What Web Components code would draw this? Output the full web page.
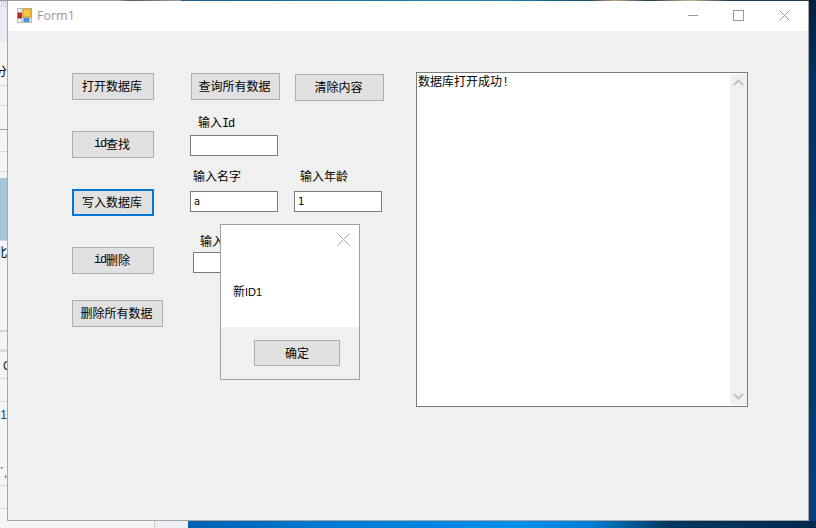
<!DOCTYPE html>
<html>
<head>
<meta charset="utf-8">
<title>Form1</title>
<style>
  html, body { margin: 0; padding: 0; width: 816px; height: 528px; overflow: hidden; }
  body { font: 12px "Noto Sans CJK SC", sans-serif; color: #000; }
  /* half width latin, like SimSun */
  .l { font: 12px "Liberation Mono", monospace; letter-spacing: -1.2px; }
  .s { font: 11px "Liberation Sans", sans-serif; }
</style>
</head>
<body>
<win-desktop>
  <win-form caption="Form1">
    <form-col slot="buttons">
      <win-button>打开数据库</win-button>
      <win-button style="margin-top:31px"><span class="l">id</span>查找</win-button>
      <win-button focused style="margin-top:31px">写入数据库</win-button>
      <win-button style="margin-top:31px"><span class="l">id</span>删除</win-button>
      <win-button wide style="margin-top:26px;width:91px">删除所有数据</win-button>
    </form-col>
    <form-col slot="fields">
      <form-row style="margin-left:1px">
        <win-button wide>查询所有数据</win-button>
        <win-button wide style="margin:1px 0 0 15px">清除内容</win-button>
      </form-row>
      <form-row style="margin-top:13px">
        <win-field label-pad="8">输入<span class="l">Id</span></win-field>
      </form-row>
      <form-row style="margin-top:12px">
        <win-field label-pad="3" value="a" gap="7">输入名字</win-field>
        <win-field label-pad="6" value="1" gap="7" style="margin-left:16px">输入年龄</win-field>
      </form-row>
      <form-row style="margin:21px 0 0 3px">
        <win-field label-pad="7" gap="3">输入</win-field>
      </form-row>
    </form-col>
    <win-textbox slot="log">数据库打开成功<span class="l">!</span></win-textbox>
    <win-dialog slot="dialog">新<span class="s">ID1</span></win-dialog>
  </win-form>
</win-desktop>

<template id="desktop-tpl">
  <style>
    :host { display: block; position: relative; width: 816px; height: 528px; overflow: hidden; background: #f5f5f5; }
    .top { position: absolute; left: 0; top: 0; width: 816px; height: 1px;
      background: linear-gradient(90deg, #9a9a9a 0, #a0a0a0 118px, #555 130px, #a0a0a0 180px, #1c5f8c 182px, #2480b0 500px, #1a4a6a 590px, #c0a870 615px, #1e3a50 650px, #c0b890 690px, #1e3a50 730px); }
    .right { position: absolute; left: 809px; top: 0; width: 7px; height: 528px;
      background: linear-gradient(180deg, #001e3c 0, #003264 80px, #00386e 250px, #003a70 400px, #004080 528px); }
    .bottom { position: absolute; left: 188px; top: 521px; width: 628px; height: 7px;
      background: linear-gradient(90deg, #0060ae 0, #0078d0 120px, #008eec 330px, #0080d8 400px, #00385f 480px, #002a50 620px); }
    .tab { position: absolute; left: 154px; top: 521px; width: 33px; height: 7px; background: #eeedf3; border-left: 1px solid #c8c8d8; }
    .head { position: absolute; left: 0; top: 1px; width: 7px; height: 41px; background: #ebebf3; }
    .grip { position: absolute; left: 1px; top: 1px; display: block; }
    .cell { position: absolute; left: 0; width: 7px; height: 1px; background: #d4d4e4; }
    .blue { position: absolute; left: 0; top: 178px; width: 7px; height: 62px; background: #a3c5d8; }
    .clip { position: absolute; left: -6px; width: 13px; height: 16px; overflow: hidden; font-size: 12px; line-height: 16px; text-align: right; }
  </style>
  <div class="top"></div>
  <div class="right"></div>
  <div class="bottom"></div>
  <div class="tab"></div>
  <div class="head"></div>
  <svg class="grip" width="6" height="6" viewBox="0 0 6 6"><path d="M0 1h1M4 1h1M2 3h1M0 5h1M4 5h1" stroke="#9a9aa4" fill="none"/></svg>
  <div class="cell" style="top:85px"></div>
  <div class="cell" style="top:105px"></div>
  <div class="cell" style="top:129px;background:#a0a0a0"></div>
  <div class="cell" style="top:151px"></div>
  <div class="cell" style="top:171px"></div>
  <div class="blue"></div>
  <div class="cell" style="top:240px"></div>
  <div class="cell" style="top:330px;height:2px;background:#c6d4e4"></div>
  <div class="cell" style="top:349px;height:3px;background:#dcdcdc"></div>
  <div class="cell" style="top:378px"></div>
  <div class="cell" style="top:401px"></div>
  <div class="cell" style="top:485px"></div>
  <div class="cell" style="top:508px"></div>
  <div class="clip" style="top:63px">分</div>
  <div class="clip" style="top:244px">北</div>
  <div class="clip" style="top:358px;color:#402010;font-family:'Liberation Sans',sans-serif;left:3px;width:4px;text-align:left">O</div>
  <div class="clip" style="top:407px;color:#204060;font-family:'Liberation Sans',sans-serif">:1</div>
  <div class="clip" style="top:465px;color:#405060;font-family:'Liberation Sans',sans-serif">`,</div>
  <slot></slot>
</template>

<template id="form-tpl">
  <style>
    :host { display: block; position: absolute; left: 7px; top: 1px; width: 800px; height: 519px; border: 1px solid #a6a6a6; border-top: 0; background: #f0f0f0; }
    .bar { display: flex; align-items: center; box-sizing: border-box; height: 30px; background: #fff; padding: 0 0 2px 9px; }
    .cap { margin-left: 5px; font: 12.5px "Open Sans", "Liberation Sans", sans-serif; color: #999; }
    .ctl { margin-left: auto; display: flex; align-items: center; }
    .ctl svg { display: block; }
    .client { position: relative; display: flex; align-items: flex-start; padding: 42px 0 0 64px; }
    .buttons { display: block; width: 118px; }
    .fields { display: block; width: 226px; }
    ::slotted([slot=dialog]) { position: absolute; left: 212px; top: 193px; }
  </style>
  <div class="bar">
    <svg width="15" height="15" viewBox="0 0 15 15">
      <rect x="0.5" y="0.5" width="14" height="14" fill="#f0f0f0" stroke="#bcbcbc"/>
      <path d="M5 0v15M0 5h5M10 10v5M5 10h10M0 10h5" stroke="#bcbcbc"/>
      <rect x="6" y="1" width="8" height="8" fill="#f6c63c" stroke="#c49a30"/>
      <rect x="1" y="5" width="3.5" height="5" fill="#d02020" stroke="#901010" stroke-width=".6"/>
      <rect x="6.5" y="10" width="6" height="4" fill="#4a90e0"/>
    </svg>
    <span class="cap"></span>
    <div class="ctl">
      <svg width="10" height="10" viewBox="0 0 10 10" style="margin-right:35px"><path d="M0 5.5h10" stroke="#999" fill="none"/></svg>
      <svg width="11" height="11" viewBox="0 0 11 11" style="margin-right:35px"><rect x="0.5" y="0.5" width="10" height="10" stroke="#999" fill="none"/></svg>
      <svg width="11" height="11" viewBox="0 0 11 11" style="margin-right:18px"><path d="M.5 .5l10 10M10.5 .5l-10 10" stroke="#999" fill="none"/></svg>
    </div>
  </div>
  <div class="client">
    <slot class="buttons" name="buttons"></slot>
    <slot class="fields" name="fields"></slot>
    <slot name="log"></slot>
    <slot name="dialog"></slot>
  </div>
</template>

<template id="button-tpl">
  <style>
    :host { display: flex; box-sizing: border-box; align-items: center; justify-content: center; width: 82px; height: 27px; padding: 0 2px 2px 0; background: #e1e1e1; border: 1px solid #adadad; font-size: 12px; line-height: 16px; white-space: nowrap; }
    :host([wide]) { width: 89px; }
    :host([focused]) { border: 2px solid #0078d7; }
  </style>
  <slot></slot>
</template>

<template id="field-tpl">
  <style>
    :host { display: block; width: 88px; font-size: 12px; }
    .lab { height: 16px; line-height: 16px; white-space: nowrap; }
    .box { box-sizing: border-box; width: 88px; height: 21px; border: 1px solid #7a7a7a; background: #fff; padding-left: 3px; font: 10px/19px "DejaVu Sans Mono", monospace; }
  </style>
  <div class="lab"><slot></slot></div>
  <div class="box"></div>
</template>

<template id="textbox-tpl">
  <style>
    :host { display: block; box-sizing: border-box; width: 332px; height: 335px; margin: -1px 0 0 0; border: 1px solid #7a7a7a; background: #fff; position: relative; font-size: 12px; line-height: 16px; }
    .wrap { display: flex; height: 100%; }
    .txt { flex: 1; padding: 0 0 0 1px; }
    .bar { display: flex; flex-direction: column; justify-content: space-between; align-items: center; box-sizing: border-box; width: 17px; height: 331px; margin-top: 1px; padding: 5px 0; background: #f0f0f0; }
    svg { display: block; }
  </style>
  <div class="wrap">
    <div class="txt"><slot></slot></div>
    <div class="bar">
      <svg width="11" height="7" viewBox="0 0 11 7"><path d="M1 6l4.5-4.5L10 6" stroke="#c2c2c2" stroke-width="2" fill="none"/></svg>
      <svg width="11" height="7" viewBox="0 0 11 7"><path d="M1 1l4.5 4.5L10 1" stroke="#c2c2c2" stroke-width="2" fill="none"/></svg>
    </div>
  </div>
</template>

<template id="dialog-tpl">
  <style>
    :host { display: block; box-sizing: border-box; width: 140px; height: 156px; border: 1px solid #a0a0a0; background: #f0f0f0; }
    .top { position: relative; height: 102px; background: #fff; display: flex; align-items: center; padding: 0 0 0 12px; box-sizing: border-box; font: 12px/16px "Noto Sans CJK SC", sans-serif; }
    .msg { margin-top: 30px; }
    svg { position: absolute; right: 9px; top: 8px; display: block; }
    .foot { display: flex; justify-content: flex-end; padding: 13px 19px 0 0; }
    .ok { display: flex; box-sizing: border-box; align-items: center; justify-content: center; width: 86px; height: 26px; padding-bottom: 2px; background: #e1e1e1; border: 1px solid #adadad; font-size: 12px; }
  </style>
  <div class="top">
    <div class="msg"><slot></slot></div>
    <svg width="13" height="13" viewBox="0 0 13 13"><path d="M.5 .5l12 12M12.5 .5l-12 12" stroke="#a8a8a8" fill="none"/></svg>
  </div>
  <div class="foot"><div class="ok">确定</div></div>
</template>

<script>
// every element just clones its own template into an open shadow root
class TplElement extends HTMLElement {
  constructor() {
    super();
    this.attachShadow({ mode: "open" });
    const tpl = document.getElementById(this.constructor.tplId);
    this.shadowRoot.appendChild(tpl.content.cloneNode(true));
  }
}

class WinDesktop extends TplElement { static tplId = "desktop-tpl"; }

class WinForm extends TplElement {
  static tplId = "form-tpl";
  connectedCallback() {
    this.shadowRoot.querySelector(".cap").textContent = this.getAttribute("caption");
  }
}

class WinButton extends TplElement { static tplId = "button-tpl"; }

class WinField extends TplElement {
  static tplId = "field-tpl";
  connectedCallback() {
    this.shadowRoot.querySelector(".lab").style.paddingLeft = (this.getAttribute("label-pad") || 0) + "px";
    this.shadowRoot.querySelector(".lab").style.marginBottom = (this.getAttribute("gap") || 5) + "px";
    this.shadowRoot.querySelector(".box").textContent = this.getAttribute("value") || "";
  }
}

class WinTextbox extends TplElement { static tplId = "textbox-tpl"; }
class WinDialog extends TplElement { static tplId = "dialog-tpl"; }

class FormCol extends HTMLElement {
  constructor() {
    super();
    this.attachShadow({ mode: "open" });
    this.shadowRoot.innerHTML = `<style>:host{display:flex;flex-direction:column;align-items:flex-start}</style><slot></slot>`;
  }
}

class FormRow extends HTMLElement {
  constructor() {
    super();
    this.attachShadow({ mode: "open" });
    this.shadowRoot.innerHTML = `<style>:host{display:flex;align-items:flex-start}</style><slot></slot>`;
  }
}

window.customElements.define("win-desktop", WinDesktop);
window.customElements.define("win-form", WinForm);
window.customElements.define("win-button", WinButton);
window.customElements.define("win-field", WinField);
window.customElements.define("win-textbox", WinTextbox);
window.customElements.define("win-dialog", WinDialog);
window.customElements.define("form-col", FormCol);
window.customElements.define("form-row", FormRow);
</script>
</body>
</html>
